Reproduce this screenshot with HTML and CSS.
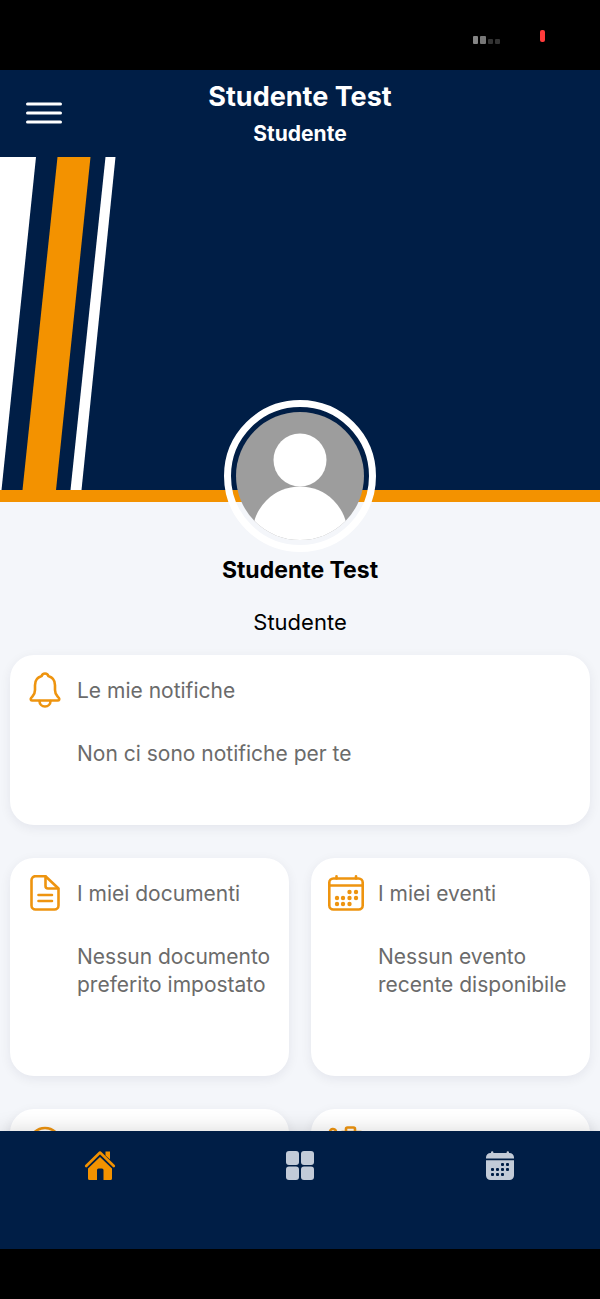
FILE: index.html
```html
<!DOCTYPE html>
<html lang="it">
<head>
<meta charset="utf-8">
<meta name="viewport" content="width=device-width, initial-scale=1">
<title>Studente Test</title>
<link rel="stylesheet" href="styles.css">
</head>
<body>
<div class="app">
  <div class="status">
    <svg class="signal" viewBox="0 0 28 10" aria-hidden="true">
      <rect x="0" y="1" width="5" height="8" rx="1" fill="#858585"/>
      <rect x="7" y="1" width="6" height="8" rx="1" fill="#777"/>
      <rect x="15" y="4" width="5" height="5" rx="1" fill="#333"/>
      <rect x="22" y="4" width="5" height="5" rx="1" fill="#333"/>
    </svg>
    <span class="battery"></span>
  </div>

  <header class="topbar">
    <button class="menu" type="button" aria-label="Menu">
      <svg viewBox="0 0 36 22" fill="none" stroke="#fff" stroke-width="3" stroke-linecap="round">
        <path d="M1.500 2H34.500M1.500 11H34.500M1.500 20H34.500"/>
      </svg>
    </button>
    <div class="titles">
      <h1 class="title">Studente Test</h1>
      <p class="subtitle">Studente</p>
    </div>
  </header>

  <main class="content">
    <div class="hero">
      <svg class="stripes" viewBox="0 0 120 333" aria-hidden="true">
        <path fill="#fff" d="M0 0H36L1.500 333H0z"/>
        <path fill="#f39200" d="M57.500 0H90.500L56 333H22.500z"/>
        <path fill="#fff" d="M105.500 0H115.500L81.500 333H70.500z"/>
      </svg>
    </div>

    <section class="profile">
      <div class="avatar">
        <svg viewBox="0 0 128 128" aria-hidden="true">
          <defs><clipPath id="disc"><circle cx="64" cy="64" r="64"/></clipPath></defs>
          <g clip-path="url(#disc)">
            <rect width="128" height="128" fill="#9d9d9d"/>
            <circle cx="64" cy="48" r="26.500" fill="#fff"/>
            <circle cx="64" cy="122" r="47.500" fill="#fff"/>
          </g>
        </svg>
      </div>
      <h2 class="name">Studente Test</h2>
      <p class="role">Studente</p>
    </section>

    <section class="cards">
      <article class="card wide">
        <svg class="icon" viewBox="0 0 36 36" aria-hidden="true">
          <path d="M18 1.500c-1.700 0-3 1.100-3.300 2.600C10.300 5.400 8 8.800 8 13.200V18c0 3-1 4.900-2.600 6.500L4.100 26c-.8 1-.3 2.500 1.200 2.500h25.400c1.500 0 2-1.500 1.200-2.500l-1.300-1.500C29 22.900 28 21 28 18v-4.800c0-4.400-2.300-7.800-6.700-9.100C21 2.600 19.700 1.500 18 1.500z"/>
          <path d="M12.500 29c0 3 2.400 5.500 5.500 5.500s5.500-2.500 5.500-5.500"/>
        </svg>
        <h3 class="card-title">Le mie notifiche</h3>
        <p class="card-text">Non ci sono notifiche per te</p>
      </article>

      <article class="card">
        <svg class="icon" viewBox="0 0 36 36" aria-hidden="true">
          <path d="M8.500 1.200H18.500L31.500 13.500V30.500a4 4 0 0 1-4 4H8.500a4 4 0 0 1-4-4V5.200a4 4 0 0 1 4-4z"/>
          <path d="M18.500 1.500V11a2.500 2.500 0 0 0 2.500 2.500H31M11.500 20H25M11.500 26H25"/>
        </svg>
        <h3 class="card-title">I miei documenti</h3>
        <p class="card-text">Nessun documento preferito impostato</p>
      </article>

      <article class="card">
        <svg class="icon" viewBox="0 0 36 36" aria-hidden="true">
          <rect x="1.300" y="3.500" width="33.400" height="31" rx="4"/>
          <path d="M1.500 10.500H34.500M8.500 1.300V3.500M28 1.300V3.500"/>
          <g class="dots">
            <circle cx="21.500" cy="17" r="2.200"/><circle cx="28" cy="17" r="2.200"/>
            <circle cx="9" cy="23" r="2.200"/><circle cx="15" cy="23" r="2.200"/><circle cx="21.500" cy="23" r="2.200"/><circle cx="28" cy="23" r="2.200"/>
            <circle cx="9" cy="29" r="2.200"/><circle cx="15" cy="29" r="2.200"/><circle cx="21.500" cy="29" r="2.200"/>
          </g>
        </svg>
        <h3 class="card-title">I miei eventi</h3>
        <p class="card-text">Nessun evento recente disponibile</p>
      </article>

      <article class="card">
        <svg class="icon" viewBox="0 0 36 36" aria-hidden="true">
          <circle cx="18" cy="17.500" r="15.500"/>
        </svg>
      </article>

      <article class="card">
        <svg class="icon" viewBox="0 0 36 36" aria-hidden="true">
          <path d="M18 5V3a1.500 1.500 0 0 1 1.500-1.500h6A1.500 1.500 0 0 1 27 3v2M2 6.500a3 3 0 0 1 6-1M14 6H33V33H4V8"/>
        </svg>
      </article>
    </section>
  </main>

  <nav class="tabs">
    <a class="tab active" href="#home" aria-label="Home">
      <svg viewBox="0 0 32 32" fill="currentColor">
        <path d="M16 8 28 19.500V29.500a1.500 1.500 0 0 1-1.500 1.500H19.500V21a1.500 1.500 0 0 0-1.500-1.500H14.500A1.500 1.500 0 0 0 13 21V31H5.500A1.500 1.500 0 0 1 4 29.500V19.500z"/>
        <path d="M21.500 2.500h4.500v8l-4.500-4z"/>
        <path d="M2.200 17 16 3.500 29.800 17" fill="none" stroke="currentColor" stroke-width="2.600" stroke-linecap="round" stroke-linejoin="round"/>
      </svg>
    </a>
    <a class="tab" href="#menu" aria-label="Servizi">
      <svg viewBox="0 0 32 32" fill="currentColor">
        <rect x="2" y="2" width="13" height="14" rx="3"/><rect x="17" y="2" width="13" height="14" rx="3"/>
        <rect x="2" y="17.500" width="13" height="13.500" rx="3"/><rect x="17" y="17.500" width="13" height="13.500" rx="3"/>
      </svg>
    </a>
    <a class="tab" href="#calendario" aria-label="Calendario">
      <svg viewBox="0 0 32 32" fill="currentColor">
        <path d="M2 8.500a4.500 4.500 0 0 1 4.500-4.500h.5V3.500a1.200 1.200 0 0 1 2.400 0V4h13.200V3.500a1.200 1.200 0 0 1 2.400 0V4h.5A4.500 4.500 0 0 1 30 8.500V9.500H2z"/>
        <path d="M2 11.200H30V26.500a4.500 4.500 0 0 1-4.500 4.500h-19A4.500 4.500 0 0 1 2 26.500z"/>
        <g fill="#001e46">
          <rect x="17" y="14" width="3" height="3" rx="1"/><rect x="22" y="14" width="3" height="3" rx="1"/>
          <rect x="7" y="19" width="3" height="3" rx="1"/><rect x="12" y="19" width="3" height="3" rx="1"/><rect x="17" y="19" width="3" height="3" rx="1"/><rect x="22" y="19" width="3" height="3" rx="1"/>
          <rect x="7" y="24" width="3" height="3" rx="1"/><rect x="12" y="24" width="3" height="3" rx="1"/><rect x="17" y="24" width="3" height="3" rx="1"/>
        </g>
      </svg>
    </a>
  </nav>
</div>
</body>
</html>
```

FILE: styles.css
```css
* {
  box-sizing: border-box;
}

body {
  margin: 0;
  background: #000;
  font-family: Inter, "Liberation Sans", sans-serif;
}

h1, h2, h3, p {
  margin: 0;
}

svg {
  display: block;
}

.app {
  display: flex;
  flex-direction: column;
  height: 100vh;
  padding-bottom: 50px;
}

.status {
  display: flex;
  flex: none;
  justify-content: flex-end;
  gap: 39px;
  padding: 30px 55px 25px;
}

.signal {
  width: 28px;
  height: 10px;
  margin-top: 5px;
}

.battery {
  width: 5px;
  height: 12px;
  border-radius: 2px;
  background: #ff3b3b;
}

.topbar {
  display: grid;
  flex: none;
  grid-template-columns: 88px 1fr 88px;
  align-items: center;
  padding: 9px 0 10px;
  background: #001e46;
  color: #fff;
}

.menu {
  margin: 0;
  padding: 0 26px;
  border: 0;
  background: none;
}

.menu svg {
  width: 36px;
  height: 22px;
}

.titles {
  text-align: center;
}

.title {
  font-size: 27px;
  font-weight: 700;
  line-height: 36px;
}

.subtitle {
  padding-top: 6px;
  font-size: 21px;
  font-weight: 700;
  line-height: 26px;
}

.content {
  flex: 1;
  min-height: 0;
  overflow: hidden;
  background: #f4f6fa;
}

.hero {
  border-bottom: 12px solid #f39200;
  background: #001e46;
}

.stripes {
  width: 120px;
  height: 333px;
}

.profile {
  display: flex;
  flex-direction: column;
  align-items: center;
  margin-top: -102px;
  color: #000;
}

.avatar {
  position: relative;
  width: 152px;
  padding: 5px;
  border: 7px solid #fff;
  border-radius: 50%;
}

.name {
  padding-top: 4px;
  font-size: 23px;
  font-weight: 700;
  line-height: 28px;
}

.role {
  padding: 24px 0 19px;
  font-size: 22px;
  line-height: 28px;
}

.cards {
  display: grid;
  grid-template-columns: 1fr 1fr;
  gap: 33px 22px;
  padding: 0 10px;
}

.card {
  display: grid;
  grid-template-columns: 36px 1fr;
  align-content: start;
  gap: 30px 14px;
  min-height: 218px;
  padding: 17px 14px 17px 17px;
  border-radius: 24px;
  background: #fff;
  box-shadow: 0 3px 12px rgba(0, 20, 60, 0.07);
  color: #6b6b6b;
}

.wide {
  grid-column: 1 / -1;
  min-height: 170px;
}

.icon {
  width: 36px;
  height: 36px;
  fill: none;
  stroke: #ee940f;
  stroke-width: 2.6px;
  stroke-linecap: round;
  stroke-linejoin: round;
}

.dots {
  fill: #ee940f;
  stroke: none;
}

.card-title {
  font-size: 21px;
  font-weight: 400;
  line-height: 38px;
}

.card-text {
  grid-column: 2;
  font-size: 21px;
  line-height: 28px;
}

.tabs {
  position: relative;
  display: grid;
  flex: none;
  grid-template-columns: repeat(3, 1fr);
  background: #001e46;
  box-shadow: 0 0 20px rgba(0, 0, 0, 0.16);
}

.tab {
  display: flex;
  justify-content: center;
  padding: 18px 0 68px;
  color: #c2cbd8;
}

.tab svg {
  width: 32px;
  height: 32px;
}

.active {
  color: #f39200;
}
```
